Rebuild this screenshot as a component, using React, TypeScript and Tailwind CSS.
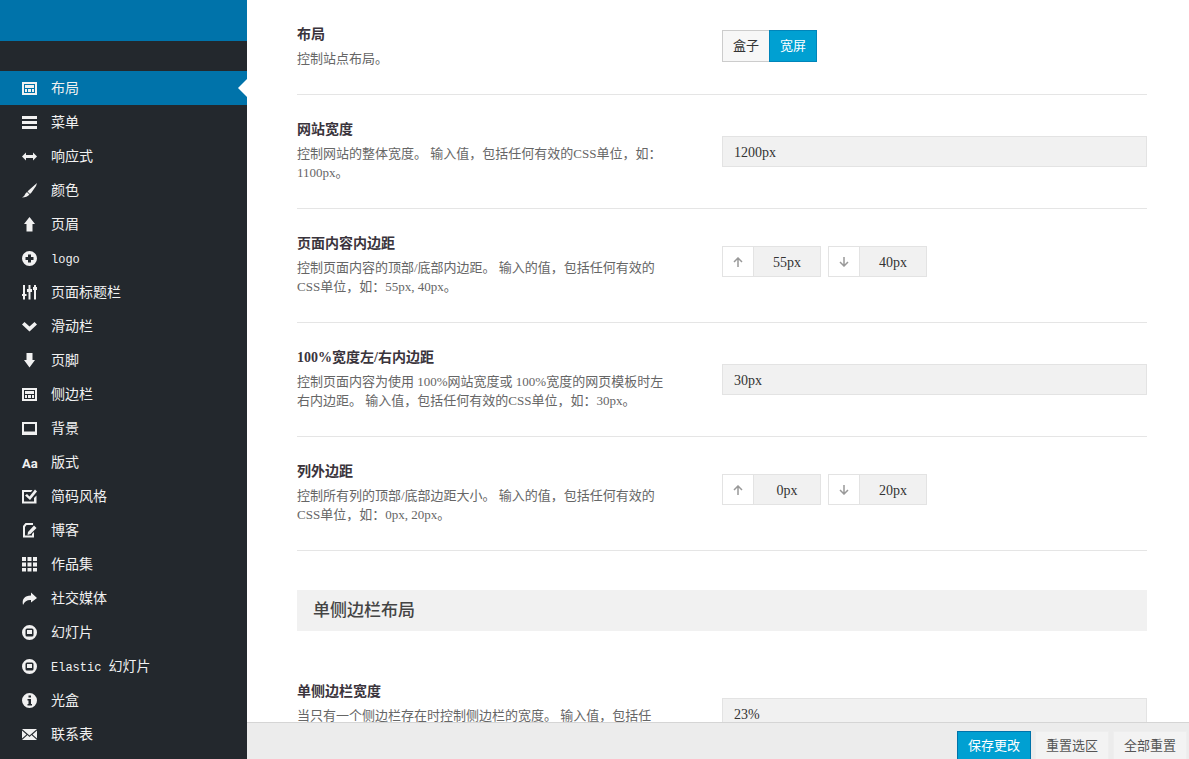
import type { ReactNode } from "react";
import { clsx } from "clsx";

const LayoutIcon = <path fillRule="evenodd" d="M0 1h15v13H0zM2 3v9h11V3zM3 4h9v3H3zM3 8h2v3H3zM6 8h3v3H6zM10 8h2v3h-2z" />;

const SlideIcon = (
  <path
    fillRule="evenodd"
    d="M7.5 0a7.5 7.5 0 1 1 0 15a7.5 7.5 0 0 1 0-15zM5 3.5Q3.5 3.5 3.5 5v5q0 1.5 1.5 1.5h5q1.500 0 1.500-1.500V5q0-1.500-1.500-1.500zM5 5h5v4H5z"
  />
);

const menu: { label: string; icon: ReactNode }[] = [
  { label: "布局", icon: LayoutIcon },
  { label: "菜单", icon: <path d="M0 1h15v3H0zM0 6h15v3H0zM0 11h15v3H0z" /> },
  { label: "响应式", icon: <path d="M0 7.500L4 3.500v2.500h7V3.500l4 4L11 11.500V9H4V11.500z" /> },
  { label: "颜色", icon: <path d="M15 0L14 3L9.500 9.500L8 11L5.500 8.500L7 7zM5 9L7.500 11.500Q5 14.500 0 14.500Q3 12.500 3.500 10.500z" /> },
  { label: "页眉", icon: <path d="M7.500 0L13 7H10.500v7.500H4.500V7H2z" /> },
  {
    label: "logo",
    icon: <path fillRule="evenodd" d="M7.500 0a7.500 7.500 0 1 1 0 15a7.500 7.500 0 0 1 0-15zM6 3.500V6H3.500v3H6v2.500h3V9h2.500V6H9V3.500z" />,
  },
  {
    label: "页面标题栏",
    icon: <path d="M1 0h2v9h1.500v2H3v3.500H1V11H0V9h1zM6.500 0h2v4H10v3H8.500v7.500h-2V7H5V4h1.500zM12 0h2v2h1v3h-1v9.500h-2V5h-1V2h1z" />,
  },
  { label: "滑动栏", icon: <path d="M2.500 3L7.500 7.500L12.500 3L15 5.500L7.500 12.500L0 5.500z" /> },
  { label: "页脚", icon: <path d="M4.500 0h6v7h2.500l-5.500 7.500L2 7h2.500z" /> },
  { label: "侧边栏", icon: LayoutIcon },
  { label: "背景", icon: <path fillRule="evenodd" d="M0 1h15v13H0zM2 3v7.500h11V3z" /> },
  {
    label: "版式",
    icon: (
      <text x="0" y="13" fontSize="13" fontWeight="bold" fontFamily="Roboto, sans-serif">
        Aa
      </text>
    ),
  },
  {
    label: "简码风格",
    icon: <path d="M0 1h10.500L9 3H2v9.500h10V9l2.500-2.500V14.500H0zM3 6.500l2-1.500 2.500 2.500L13 0.500l2 2L8 11z" />,
  },
  {
    label: "博客",
    icon: (
      <>
        <path d="M3.500 0H11v2H4.500L3 4v8.500h7V11l2-2v5.500H1V3z" />
        <path d="M12 2.500l2.500 2.500L8.500 11L5.500 12L6 9z" />
      </>
    ),
  },
  {
    label: "作品集",
    icon: <path d="M0 0h4v4H0zM5.500 0h4v4h-4zM11 0h4v4h-4zM0 5.500h4v4H0zM5.500 5.500h4v4h-4zM11 5.500h4v4h-4zM0 11h4v3.500H0zM5.500 11h4v3.500h-4zM11 11h4v3.500h-4z" />,
  },
  { label: "社交媒体", icon: <path d="M9 1.500L15 7L9 11.500V9Q3.500 8.500 1 14Q-1 5 9 4.500z" /> },
  { label: "幻灯片", icon: SlideIcon },
  { label: "Elastic 幻灯片", icon: SlideIcon },
  {
    label: "光盒",
    icon: <path fillRule="evenodd" d="M7.500 0a7.500 7.500 0 1 1 0 15a7.500 7.500 0 0 1 0-15zM6.500 2.500v2h2.500v-2zM5.500 6v1.500h1V11h-1v1.500h4.500V11H9V6z" />,
  },
  {
    label: "联系表",
    icon: <path d="M0 2h15L7.500 8.500zM0 3.500L4.500 7.500L0 11.500zM15 3.500V11.500L10.500 7.500zM0 13l5.500-5L7.500 10l2-2L15 13z" />,
  },
];

// Latin runs in the menu are set in a face half as wide as a Chinese character.
function MenuLabel({ text }: { text: string }) {
  return (
    <span className="pt-0.5 whitespace-pre">
      {text.split(/([\x20-\x7e]+)/).map((part, i) =>
        i % 2 ? (
          <span key={i} className="font-['Liberation_Mono',monospace] text-[12px] leading-none">
            {part}
          </span>
        ) : (
          part
        ),
      )}
    </span>
  );
}

function Row({ title, text, htmlFor, last, children }: { title: string; text: string; htmlFor?: string; last?: boolean; children: ReactNode }) {
  const Title = htmlFor ? "label" : "h3";
  return (
    <div className={clsx("flex pt-6 pb-[26px]", !last && "border-b border-[#e5e5e5]")}>
      <div className="w-1/2 shrink-0 pr-[57px]">
        <Title htmlFor={htmlFor} className="block text-[14px] leading-[22px] font-bold text-[#3a343c]">
          {title}
        </Title>
        <p className="mt-[3px] text-[13px] leading-[19px] text-[#666]">{text}</p>
      </div>
      {children}
    </div>
  );
}

function TextField({ id, value }: { id: string; value: string }) {
  return (
    <div className="flex-1 pt-[17px]">
      <input id={id} defaultValue={value} className="block h-[31px] w-full border border-[#e3e3e3] bg-[#f1f1f1] px-[11px] pt-0.5 text-[14px] text-[#333]" />
    </div>
  );
}

function Spacing({ top, bottom }: { top: string; bottom: string }) {
  const sides = [
    { name: "顶部", value: top, d: "M5 10V1M1 5l4-4 4 4" },
    { name: "底部", value: bottom, d: "M5 0v9M1 5l4 4 4-4" },
  ];
  return (
    <div className="flex gap-[7px] pt-[13px]">
      {sides.map((side) => (
        <label key={side.name} className="flex h-[31px] w-[99px] border border-[#e3e3e3] bg-white">
          <span className="flex w-[30px] shrink-0 items-center justify-center">
            <svg viewBox="0 0 10 10" className="size-[10px]" fill="none" stroke="#999" strokeWidth="1.5">
              <path d={side.d} />
            </svg>
          </span>
          <input
            aria-label={side.name}
            defaultValue={side.value}
            className="w-full min-w-0 border-l border-[#e3e3e3] bg-[#f1f1f1] pt-0.5 text-center text-[14px] text-[#333]"
          />
        </label>
      ))}
    </div>
  );
}

export default function App() {
  return (
    <div className="flex h-screen overflow-hidden bg-white font-['Liberation_Serif','Noto_Sans_CJK_SC',serif]">
      <aside className="w-[247px] shrink-0 overflow-hidden bg-[#23282d]">
        <div className="h-[41px] bg-[#0073aa]" />
        <nav className="pt-[30px]">
          {menu.map((item, i) => (
            <a
              key={item.label}
              href="#"
              className={clsx("relative flex h-[34px] items-center gap-[14px] pl-[22px] text-[14px] leading-5 text-[#f1f1f1]", i === 0 && "bg-[#0073aa]")}
            >
              <svg viewBox="0 0 15 15" className="mt-px size-[15px] shrink-0 overflow-visible" fill="currentColor">
                {item.icon}
              </svg>
              <MenuLabel text={item.label} />
              {i === 0 && <span className="absolute right-0 border-y-[9px] border-r-[9px] border-y-transparent border-r-white" />}
            </a>
          ))}
        </nav>
      </aside>

      <div className="flex min-w-0 flex-1 flex-col">
        <main className="min-h-0 flex-1 overflow-hidden pr-[42px] pl-[50px]">
          <Row title="布局" text="控制站点布局。">
            <div className="flex h-8 pt-[6px] text-[13px]">
              <button className="h-8 border border-r-0 border-[#ccc] bg-[#f7f7f7] px-[10px] text-[#333]">盒子</button>
              <button className="h-8 border border-[#0085ba] bg-[#00a0d2] px-[10px] text-white">宽屏</button>
            </div>
          </Row>
          <Row title="网站宽度" htmlFor="site-width" text="控制网站的整体宽度。 输入值，包括任何有效的CSS单位，如：1100px。">
            <TextField id="site-width" value="1200px" />
          </Row>
          <Row title="页面内容内边距" text="控制页面内容的顶部/底部内边距。 输入的值，包括任何有效的CSS单位，如：55px, 40px。">
            <Spacing top="55px" bottom="40px" />
          </Row>
          <Row title="100%宽度左/右内边距" htmlFor="side-padding" text="控制页面内容为使用 100%网站宽度或 100%宽度的网页模板时左右内边距。 输入值，包括任何有效的CSS单位，如：30px。">
            <TextField id="side-padding" value="30px" />
          </Row>
          <Row title="列外边距" text="控制所有列的顶部/底部边距大小。 输入的值，包括任何有效的CSS单位，如：0px, 20px。">
            <Spacing top="0px" bottom="20px" />
          </Row>

          <h2 className="mt-[39px] mb-[26px] h-[41px] bg-[#f1f1f1] px-4 text-[17px] leading-[41px] font-medium text-[#444]">单侧边栏布局</h2>

          <Row last title="单侧边栏宽度" htmlFor="sidebar-width" text="当只有一个侧边栏存在时控制侧边栏的宽度。 输入值，包括任">
            <TextField id="sidebar-width" value="23%" />
          </Row>
        </main>

        <footer className="flex h-[37px] shrink-0 items-start justify-end gap-1 overflow-hidden border-t border-[#d5d5d5] bg-[#ececec] pt-2 pr-[2px] text-[13px]">
          <button className="h-[30px] border border-[#0073aa] bg-[#00a0d2] px-[10px] text-white">保存更改</button>
          <button className="h-[30px] border border-[#eee] bg-[#f3f3f3] px-[10px] text-[#555]">重置选区</button>
          <button className="h-[30px] border border-[#eee] bg-[#f3f3f3] px-[10px] text-[#555]">全部重置</button>
        </footer>
      </div>
    </div>
  );
}
